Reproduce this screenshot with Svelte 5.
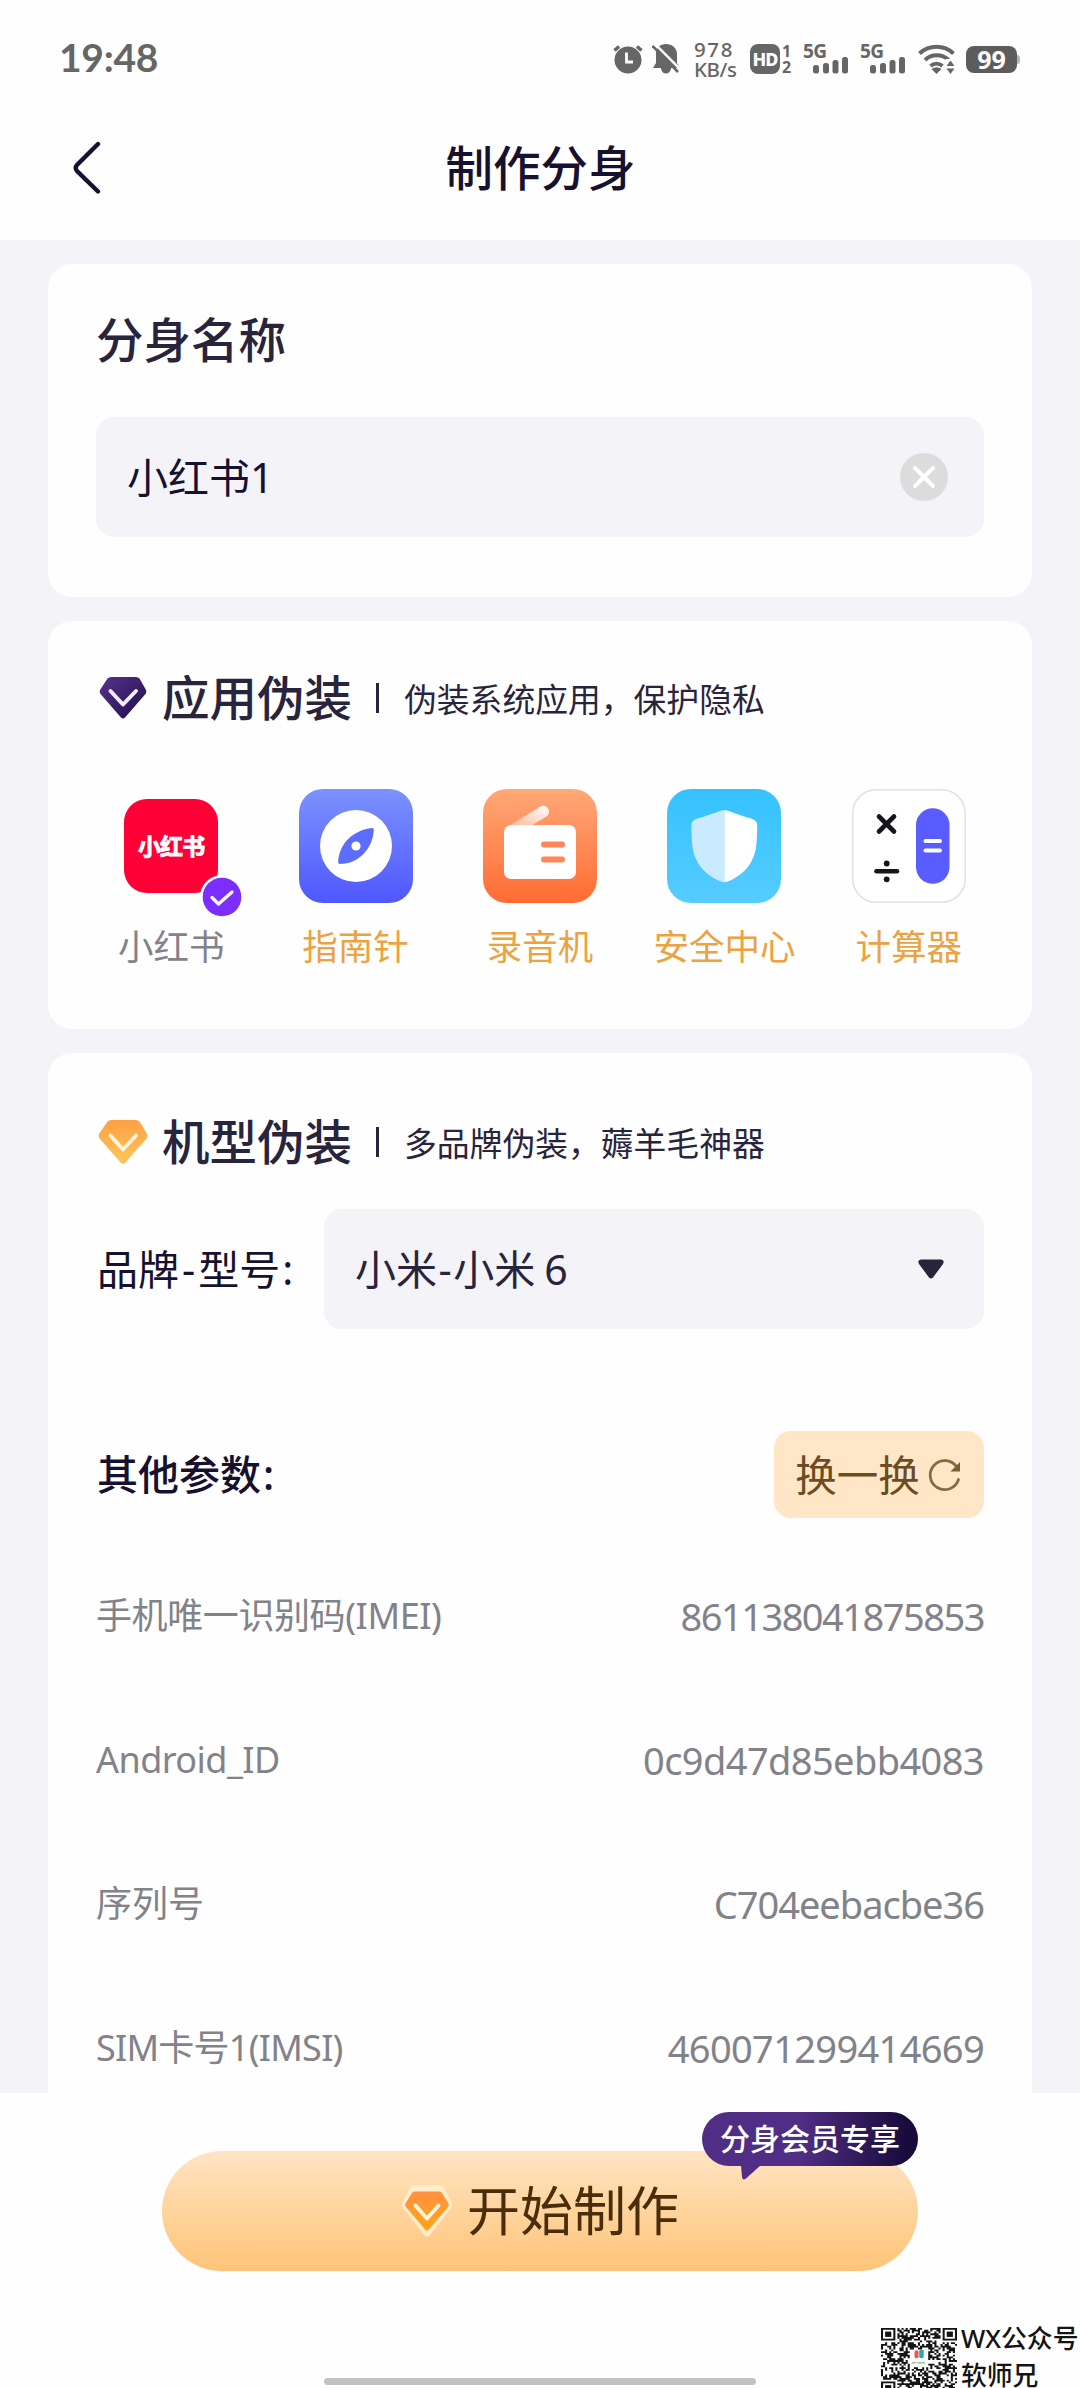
<script lang="ts">
	type App = { id: string; name: string; free?: boolean };

	const apps: App[] = [
		{ id: 'xhs', name: '小红书', free: true },
		{ id: 'compass', name: '指南针' },
		{ id: 'recorder', name: '录音机' },
		{ id: 'security', name: '安全中心' },
		{ id: 'calculator', name: '计算器' }
	];

	const params = [
		{ label: '手机唯一识别码(IMEI)', labelTracking: -0.4, value: '861138041875853', tracking: -1.5 },
		{ label: 'Android_ID', labelTracking: -0.55, value: '0c9d47d85ebb4083', tracking: -0.6 },
		{ label: '序列号', labelTracking: 0, value: 'C704eebacbe36', tracking: -1 },
		{ label: 'SIM卡号1(IMSI)', labelTracking: -0.75, value: '460071299414669', tracking: -0.65 }
	];

	let selected = $state('xhs');
	let cloneName = $state('小红书1');

	const QR_SIZE = 37;

	function buildQr() {
		let seed = 20231;
		let d = '';
		for (let y = 0; y < QR_SIZE; y++) {
			for (let x = 0; x < QR_SIZE; x++) {
				seed = (seed * 1103515245 + 12345) % 2147483648;
				const top = y < 8 && (x < 8 || x > QR_SIZE - 9);
				const bottom = y > QR_SIZE - 9 && x < 8;
				const logo = x > 13 && x < 23 && y > 11 && y < 22;
				if (top || bottom || logo) continue;
				if ((seed >> 16) % 100 < 52) d += `M${x} ${y}h1v1h-1z`;
			}
		}
		return d;
	}

	const qrPath = buildQr();
	const finders = [
		[0, 0],
		[QR_SIZE - 7, 0],
		[0, QR_SIZE - 7]
	];
</script>

{#snippet signal()}
	<svg class="signal" viewBox="0 0 44 32" width="44" height="32">
		<text x="-1" y="15" class="signal-text">5G</text>
		<g fill="#666">
			<rect x="9" y="22" width="6" height="8.500" rx="2.500" />
			<rect x="19" y="20" width="6" height="10.500" rx="2.500" />
			<rect x="28.500" y="17" width="6" height="13.500" rx="2.500" />
			<rect x="38" y="14" width="6" height="16.500" rx="2.500" />
		</g>
	</svg>
{/snippet}

<div class="page">
	<div class="status-bar">
		<span class="time">19:48</span>
		<div class="status-icons">
			<svg class="alarm" viewBox="0 0 30 32" width="30" height="32">
				<circle cx="15" cy="17" r="13.5" fill="#666" />
				<path d="M1.5 7.5 6 3.5M28.500 7.500 24 3.500" stroke="#666" stroke-width="3.500" fill="none" />
				<path d="M13.500 9.500v9.500h6.500" stroke="#fff" stroke-width="2.800" fill="none" />
			</svg>
			<svg class="bell" viewBox="0 0 28 32" width="28" height="32">
				<path d="M14 1c6 0 11 4 11 10v9l3 5H1l3-5v-9C4 5 8 1 14 1zM9 25h10a5 5.500 0 0 1-10 0z" fill="#666" />
				<path d="M1 -1 29 27" stroke="#fff" stroke-width="2.500" />
				<path d="M.500 3 26 29" stroke="#666" stroke-width="2.500" />
			</svg>
			<div class="speed">
				<span class="speed-value">978</span>
				<span>KB/s</span>
			</div>
			<div class="hd">
				<span class="hd-badge">HD</span>
				<div class="hd-nums">
					<span>1</span>
					<span>2</span>
				</div>
			</div>
			{@render signal()}
			{@render signal()}
			<svg class="wifi" viewBox="0 0 38 32" width="38" height="32">
				<g fill="none" stroke="#666" stroke-width="4">
					<path d="M1.500 10.500a25 25 0 0 1 34 0" />
					<path d="M7 17a17 17 0 0 1 23.500 0" />
					<path d="M12.500 23a9.500 9.500 0 0 1 12 0" />
				</g>
				<path d="M13.500 26q5-3.500 10 0l-5 5z" fill="#666" />
				<path d="M27.500 16h10v16h-10z" fill="#fefefe" />
				<path d="M28.500 23l4-5.500 4 5.500zM28.500 25.500h8l-4 5.500z" fill="#666" />
			</svg>
			<div class="battery">99</div>
		</div>
	</div>

	<header class="nav">
		<button class="back" aria-label="返回">
			<svg viewBox="0 0 28 56" width="28" height="56">
				<path d="M25 4 4 25q-2.500 3 0 6L25 51.500" fill="none" stroke="#16112e" stroke-width="4.400" stroke-linecap="round" />
			</svg>
		</button>
		<h1>制作分身</h1>
	</header>

	<main class="content">
		<section class="card card--name">
			<h2>分身名称</h2>
			<div class="field">
				<span>{cloneName}</span>
				<button class="clear" aria-label="清除" onclick={() => (cloneName = '')}>
					<svg viewBox="0 0 48 48" width="48" height="48">
						<circle cx="24" cy="24" r="24" fill="#dcdcdc" />
						<path d="M15 15l18 18M33 15 15 33" stroke="#fff" stroke-width="4" stroke-linecap="round" />
					</svg>
				</button>
			</div>
		</section>

		<section class="card card--apps">
			<div class="section-head">
				<svg class="gem" viewBox="0 0 50 46" width="50" height="46">
					<defs>
						<linearGradient id="gem-purple" x1="0" y1="0" x2="1" y2="1">
							<stop offset="0" stop-color="#57338f" />
							<stop offset="1" stop-color="#1f0d48" />
						</linearGradient>
					</defs>
					<path d="M13 2h25q2 0 3.500 1.500L48 15q1 2-.5 4L27 42.500q-2 2-4 0L2.500 19q-1.500-2-.5-4L9.500 3.500Q11 2 13 2z" fill="url(#gem-purple)" />
					<path d="M12.500 16 25 29.500l13-13.500" fill="none" stroke="#f3effa" stroke-width="3.900" stroke-linecap="round" stroke-linejoin="round" />
				</svg>
				<h2>应用伪装</h2>
				<i class="divider"></i>
				<span class="hint">伪装系统应用，保护隐私</span>
			</div>

			<div class="app-grid">
				{#each apps as app (app.id)}
					<button class="app" onclick={() => (selected = app.id)}>
						<div class="app-icon">
							{#if app.id === 'xhs'}
								<div class="xhs-tile"><span>小红书</span></div>
							{:else if app.id === 'compass'}
								<svg viewBox="0 0 114 114" width="114" height="114">
									<defs>
										<linearGradient id="bg-compass" x1="0" y1="0" x2="0" y2="1">
											<stop offset="0" stop-color="#7b92ff" />
											<stop offset="1" stop-color="#4f57fc" />
										</linearGradient>
									</defs>
									<rect width="114" height="114" rx="24" fill="url(#bg-compass)" />
									<circle cx="57" cy="57" r="36" fill="#fff" />
									<path d="M73 39q2-.3 1.800 2C74 59 60 75 41 75q-2 0-1.800-2C40 55 54 41 73 39z" fill="#5c6cfe" />
									<circle cx="57" cy="57" r="4.600" fill="#fff" />
								</svg>
							{:else if app.id === 'recorder'}
								<svg viewBox="0 0 114 114" width="114" height="114">
									<defs>
										<linearGradient id="bg-recorder" x1="0" y1="0" x2="0" y2="1">
											<stop offset="0" stop-color="#ffa878" />
											<stop offset="1" stop-color="#ff6c33" />
										</linearGradient>
										<linearGradient id="antenna" x1="1" y1="0" x2="0" y2="1">
											<stop offset="0" stop-color="#fff" />
											<stop offset="1" stop-color="#ffb48f" />
										</linearGradient>
									</defs>
									<rect width="114" height="114" rx="24" fill="url(#bg-recorder)" />
									<path d="M24 38 57.500 17.500c6-3 12 5 6 10L46 38z" fill="url(#antenna)" />
									<rect x="21" y="36" width="72" height="54" rx="7" fill="#fff" />
									<path d="M61 55.500h18M61 70.500h18" stroke="#ff8755" stroke-width="6" stroke-linecap="round" />
								</svg>
							{:else if app.id === 'security'}
								<svg viewBox="0 0 114 114" width="114" height="114">
									<defs>
										<linearGradient id="bg-security" x1="0" y1="0" x2="0" y2="1">
											<stop offset="0" stop-color="#34c2ff" />
											<stop offset="1" stop-color="#56ccff" />
										</linearGradient>
									</defs>
									<rect width="114" height="114" rx="24" fill="url(#bg-security)" />
									<path d="M57.300 21c-3 0-14 5-27 8.500q-6 2-6 7c.7 17 0 26 7 38 5 8 12 13 20 17q3 1.800 6 1.800z" fill="#caeaff" />
									<path d="M57.300 21c3 0 14 5 27 8.500q6 2 6 7c-.7 17 0 26-7 38-5 8-12 13-20 17q-3 1.800-6 1.800z" fill="#fff" />
								</svg>
							{:else}
								<svg viewBox="0 0 114 114" width="114" height="114">
									<rect x=".75" y=".75" width="112.500" height="112.500" rx="23.500" fill="#fff" stroke="#e2e2e4" stroke-width="1.500" />
									<g stroke="#16161a" stroke-width="4.600" stroke-linecap="round">
										<path d="M27 27.500l15 15M42 27.500l-15 15" />
										<path d="M24.500 82.300h20.500" />
									</g>
									<circle cx="34.700" cy="74.500" r="2.900" fill="#16161a" />
									<circle cx="34.700" cy="90.300" r="2.900" fill="#16161a" />
									<rect x="64" y="19.300" width="33.500" height="75.500" rx="16.700" fill="#595dff" />
									<path d="M73.500 52h14.500M73.500 61.500h14.500" stroke="#fff" stroke-width="4" stroke-linecap="round" />
								</svg>
							{/if}
							{#if selected === app.id}
								<svg class="check" viewBox="0 0 46 46" width="46" height="46">
									<circle cx="23" cy="23" r="22" fill="#fff" />
									<circle cx="23" cy="23" r="19.300" fill="#7b2eff" />
									<path d="M13 23.500l6.500 6.500L33 18" fill="none" stroke="#fff" stroke-width="3.300" stroke-linecap="round" stroke-linejoin="round" />
								</svg>
							{/if}
						</div>
						<span class="app-name" class:app-name--free={app.free}>{app.name}</span>
					</button>
				{/each}
			</div>
		</section>

		<section class="card card--device">
			<div class="section-head">
				<svg class="gem" viewBox="0 0 50 46" width="50" height="46">
					<defs>
						<linearGradient id="gem-gold" x1="0" y1="0" x2="0" y2="1">
							<stop offset="0" stop-color="#ff9f45" />
							<stop offset="1" stop-color="#ffc75a" />
						</linearGradient>
					</defs>
					<path d="M13 1h25q2 0 3.500 1.500L49 15q1 2-.5 4.500L27 44q-2 2-4 0L1.500 19.500Q0 17 1 15L9.500 2.500Q11 1 13 1z" fill="url(#gem-gold)" />
					<path d="M12.500 16.500 25 30.500l13-14" fill="none" stroke="#fff3dc" stroke-width="3.900" stroke-linecap="round" stroke-linejoin="round" />
				</svg>
				<h2>机型伪装</h2>
				<i class="divider"></i>
				<span class="hint">多品牌伪装，薅羊毛神器</span>
			</div>

			<div class="model-row">
				<span class="model-label">品牌<span class="dash">-</span>型号<span class="colon">:</span></span>
				<div class="select">
					<span>小米<span class="dash dash--tight">-</span>小米<span class="digit">6</span></span>
					<svg viewBox="0 0 28 22" width="28" height="22">
						<path d="M4 1.500h20q4 .5 2 4.500L16 19.500q-2 2-4 0L2 6Q0 2 4 1.500z" fill="#28243c" />
					</svg>
				</div>
			</div>

			<div class="params-head">
				<span class="params-title">其他参数<span class="colon">:</span></span>
				<button class="shuffle">
					换一换
					<svg viewBox="0 0 36 36" width="36" height="36">
						<path d="M31.500 22.500A14.500 14.500 0 1 1 30 10.500" fill="none" stroke="#856a44" stroke-width="2.800" stroke-linecap="round" />
						<path d="M33 5v9.500h-9.500z" fill="#7a5d35" />
					</svg>
				</button>
			</div>

			<ul class="params">
				{#each params as param}
					<li>
						<span style="letter-spacing: {param.labelTracking}px">{param.label}</span>
						<span class="value" style="letter-spacing: {param.tracking}px">{param.value}</span>
					</li>
				{/each}
			</ul>
		</section>
	</main>

	<footer class="footer">
		<button class="start">
			<svg viewBox="0 0 52 54" width="52" height="54">
				<defs>
					<linearGradient id="gem-orange" x1="0" y1="0" x2="0" y2="1">
						<stop offset="0" stop-color="#ff9141" />
						<stop offset="1" stop-color="#ffa516" />
					</linearGradient>
				</defs>
				<path d="M14 1h24q3 0 5 3l7.500 14q1.500 3-.5 6L28.500 51.500q-2.500 2.500-5 0L2 24q-2-3-.5-6L9 4q2-3 5-3z" fill="#ffeccb" />
				<path d="M13.500 7.500h25q1.500 0 2.500 1.500l6.500 10.500q1 1.500-.3 3.200L27.500 46q-1.500 1.500-3 0L4.800 22.700q-1.300-1.700-.3-3.200L11 9q1-1.500 2.500-1.500z" fill="url(#gem-orange)" />
				<path d="M14.500 21.500 26 34.500l11.500-13" fill="none" stroke="#fff3dc" stroke-width="3.900" stroke-linecap="round" stroke-linejoin="round" />
			</svg>
			<span>开始制作</span>
			<div class="vip-tip">
				分身会员专享
				<svg viewBox="0 0 20 15" width="20" height="15">
					<path d="M0 0h20L5 13.500Q1.500 16 1 12z" fill="#512e85" />
				</svg>
			</div>
		</button>
	</footer>

	<div class="home-bar"></div>

	<div class="watermark">
		<svg viewBox="0 0 37 37" width="76" height="66" preserveAspectRatio="none">
			<path d={qrPath} fill="#141414" />
			{#each finders as [x, y]}
				<rect x={x + 0.5} y={y + 0.5} width="6" height="6" fill="#fff" stroke="#141414" />
				<rect x={x + 2} y={y + 2} width="3" height="3" fill="#141414" />
			{/each}
			<rect x="16.300" y="12.500" width="2" height="4.500" rx="1" fill="#e8574e" />
			<rect x="18.600" y="12" width="2.200" height="5" rx="1" fill="#27a9b5" />
			<path d="M15 19.500h2" stroke="#e59a8c" stroke-width=".8" />
			<path d="M17.500 19.500h4" stroke="#8fc48a" stroke-width=".8" />
		</svg>
		<div class="watermark-text">
			<span>WX公众号</span>
			<span>软师兄</span>
		</div>
	</div>
</div>

<style>
	:global(body) {
		margin: 0;
		background: #fff;
	}

	.page {
		position: relative;
		display: flex;
		flex-direction: column;
		width: 1080px;
		height: 2388px;
		overflow: hidden;
		background: #fefefe;
		color: #28243c;
		font-family: 'Noto Sans', 'Noto Sans CJK SC', sans-serif;
	}

	button {
		padding: 0;
		border: none;
		background: none;
		font: inherit;
		color: inherit;
		cursor: pointer;
	}

	svg {
		display: block;
		flex: none;
	}

	h1,
	h2 {
		margin: 0;
		font-size: 47.500px;
		font-weight: 500;
		line-height: 56px;
		white-space: nowrap;
	}

	/* status bar */
	.status-bar {
		display: flex;
		align-items: center;
		justify-content: space-between;
		height: 116px;
		padding: 0 63px 0 59px;
		box-sizing: border-box;
		color: #666;
	}

	.time {
		margin-top: -3px;
		font-family: Lato, 'Noto Sans', sans-serif;
		font-size: 39px;
		font-weight: 700;
		line-height: 48px;
		letter-spacing: -0.3px;
	}

	.status-icons {
		display: flex;
		align-items: center;
		height: 32px;
		padding-top: 2px;
	}

	.bell {
		margin-left: 9px;
	}

	.speed {
		display: flex;
		flex-direction: column;
		width: 44px;
		margin-left: 14px;
		font-size: 20.500px;
		font-weight: 500;
		line-height: 20px;
		letter-spacing: -0.4px;
	}

	.speed-value {
		letter-spacing: 1.6px;
	}

	.hd {
		display: flex;
		align-items: center;
		gap: 2px;
		width: 44px;
		margin-left: 12px;
	}

	.hd-badge {
		width: 30px;
		height: 30px;
		border-radius: 8px;
		background: #666;
		color: #fff;
		font-size: 18px;
		font-weight: 800;
		line-height: 30px;
		letter-spacing: -1px;
		text-align: center;
	}

	.hd-nums {
		display: flex;
		flex-direction: column;
		font-size: 16px;
		font-weight: 700;
		line-height: 16px;
		text-align: center;
	}

	.signal {
		margin-left: 13px;
		overflow: visible;
	}

	.hd + .signal {
		margin-left: 10px;
	}

	.signal-text {
		font: 700 19px 'Noto Sans', sans-serif;
		letter-spacing: -0.5px;
		fill: #666;
	}

	.wifi {
		margin-left: 13px;
	}

	.battery {
		position: relative;
		width: 51px;
		height: 27px;
		margin-left: 10px;
		border-radius: 8px;
		background: #5c5c5c;
		color: #fff;
		font-size: 25px;
		font-weight: 700;
		line-height: 27px;
		text-align: center;
	}

	.battery::after {
		content: '';
		position: absolute;
		top: 9px;
		right: -3px;
		width: 3px;
		height: 9px;
		border-radius: 0 3px 3px 0;
		background: #b5b5b5;
	}

	/* nav */
	.nav {
		display: grid;
		grid-template-columns: 1fr auto 1fr;
		align-items: center;
		height: 124px;
		padding: 0 72px 20px 73px;
		box-sizing: border-box;
		color: #16112e;
	}

	.back {
		width: 28px;
	}

	/* content */
	.content {
		display: flex;
		flex-direction: column;
		gap: 24px;
		height: 1853px;
		padding: 24px 48px 0;
		box-sizing: border-box;
		overflow: hidden;
		background: #f4f3f8;
	}

	.card {
		flex: none;
		box-sizing: border-box;
		padding: 0 48px;
		border-radius: 24px;
		background: #fefefe;
	}

	.card--name {
		height: 333px;
		padding-top: 48px;
	}

	.field,
	.select {
		display: flex;
		align-items: center;
		justify-content: space-between;
		height: 120px;
		box-sizing: border-box;
		border-radius: 18px;
		background: #f4f3f8;
		font-size: 41px;
		line-height: 56px;
	}

	.field {
		margin-top: 49px;
		padding: 0 36px 0 31px;
		color: #16112e;
	}

	.card--apps {
		height: 408px;
		padding-top: 49px;
	}

	.section-head {
		display: flex;
		align-items: center;
		margin-left: 2px;
	}

	.section-head h2 {
		margin-left: 14px;
	}

	.divider {
		width: 3px;
		height: 30px;
		margin-left: 24px;
		background: #28243c;
	}

	.hint {
		margin-left: 25px;
		padding-top: 3px;
		font-size: 32.800px;
		line-height: 50px;
		white-space: nowrap;
	}

	.app-grid {
		display: grid;
		grid-template-columns: repeat(5, 1fr);
		margin: 63px -17px 0;
	}

	.app {
		display: flex;
		flex-direction: column;
		align-items: center;
		gap: 20px;
	}

	.app-icon {
		position: relative;
		display: grid;
		place-items: center;
		width: 114px;
		height: 114px;
	}

	.xhs-tile {
		display: grid;
		place-items: center;
		width: 94px;
		height: 94px;
		border-radius: 23px;
		background: #ff0036;
		color: #fff;
		font-size: 23px;
		font-weight: 700;
		line-height: 30px;
		letter-spacing: -0.8px;
		-webkit-text-stroke: 0.8px #fff;
	}

	.check {
		position: absolute;
		left: 85px;
		top: 85px;
	}

	.app-name {
		color: #eba341;
		font-size: 35.500px;
		line-height: 46px;
		white-space: nowrap;
	}

	.app-name--free {
		color: #828289;
	}

	.card--device {
		height: 1100px;
		padding-top: 61px;
	}

	.model-row {
		display: flex;
		align-items: center;
		justify-content: space-between;
		margin-top: 39px;
	}

	.model-label,
	.params-title {
		margin-left: 1px;
		color: #16112e;
		font-size: 41px;
		line-height: 56px;
		white-space: nowrap;
	}

	.params-title {
		padding-bottom: 2px;
		font-weight: 500;
	}

	.dash {
		padding: 0 3px;
	}

	.dash--tight {
		padding: 0 1.500px;
	}

	.colon {
		padding-left: 2px;
	}

	.select {
		width: 660px;
		padding: 0 39px 0 31px;
	}

	.digit {
		margin-left: 9px;
	}

	.params-head {
		display: flex;
		align-items: center;
		justify-content: space-between;
		margin-top: 102px;
	}

	.shuffle {
		display: flex;
		align-items: center;
		justify-content: center;
		gap: 7px;
		width: 210px;
		height: 87px;
		border-radius: 17px;
		background: #ffe6c6;
		color: #6b4c23;
		font-size: 41.500px;
		line-height: 56px;
		white-space: nowrap;
	}

	.params {
		margin: 26px 0 0;
		padding: 0;
		list-style: none;
		color: #828289;
		font-size: 36px;
	}

	.params li {
		display: flex;
		align-items: center;
		justify-content: space-between;
		height: 144px;
		line-height: 50px;
	}

	.value {
		font-size: 38px;
	}

	/* footer */
	.footer {
		display: flex;
		justify-content: center;
		padding-top: 58px;
	}

	.start {
		position: relative;
		display: flex;
		align-items: center;
		justify-content: center;
		gap: 14px;
		width: 756px;
		height: 120px;
		border-radius: 60px;
		background: linear-gradient(#ffe4c3, #ffc478);
		color: #4a2e0b;
		font-size: 53px;
		line-height: 70px;
	}

	.vip-tip {
		position: absolute;
		top: -39px;
		right: 0;
		width: 216px;
		height: 54px;
		border-radius: 27px;
		background: linear-gradient(90deg, #512e85 45%, #180b3b 95%);
		color: #fff;
		font-size: 30px;
		font-weight: 500;
		line-height: 54px;
		text-align: center;
		white-space: nowrap;
	}

	.vip-tip svg {
		position: absolute;
		left: 39px;
		top: 53px;
	}

	.home-bar {
		position: absolute;
		left: 324px;
		bottom: 3px;
		width: 432px;
		height: 7px;
		border-radius: 4px;
		background: #c1c1c1;
	}

	.watermark {
		position: absolute;
		top: 2328px;
		right: 0;
		display: flex;
		align-items: flex-start;
		gap: 4px;
		color: #141414;
	}

	.watermark-text {
		display: flex;
		flex-direction: column;
		width: 119px;
		margin-top: -8px;
		font-size: 25.800px;
		font-weight: 500;
		line-height: 37px;
		white-space: nowrap;
	}
</style>
